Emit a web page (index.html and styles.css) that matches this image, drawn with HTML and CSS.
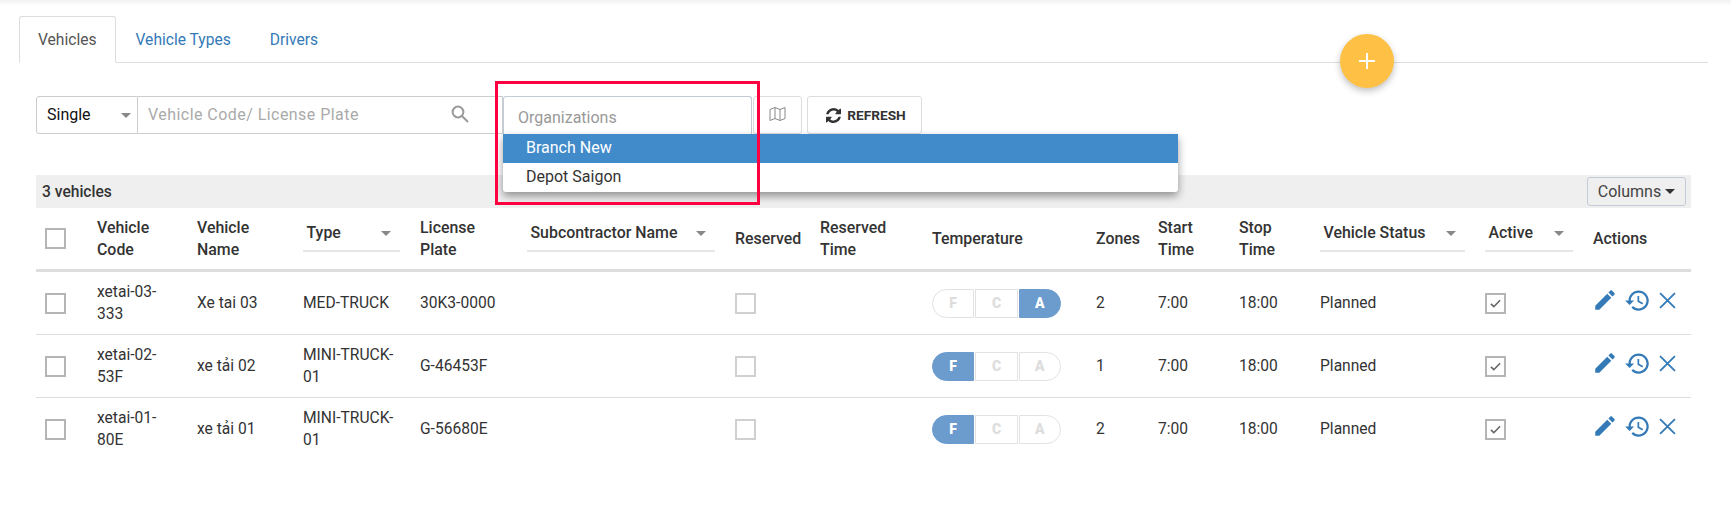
FILE: index.html
```html
<!DOCTYPE html>
<html lang="en">
<head>
    <meta charset="UTF-8">
    <title>Vehicles</title>
    <link rel="stylesheet" href="styles.css">
</head>
<body>
    <div class="top-shadow"></div>

    <div class="tabs">
        <a class="tab active">Vehicles</a>
        <a class="tab">Vehicle Types</a>
        <a class="tab">Drivers</a>
    </div>
    <button class="fab"><svg width="18" height="18" viewBox="0 0 18 18"><path d="M9 1v16M1 9h16" stroke="#fff" stroke-width="2"/></svg></button>

    <div class="toolbar">
        <div class="mode">Single<span class="arrow"></span></div>
        <div class="search">
            <span class="placeholder">Vehicle Code/ License Plate</span>
            <svg width="18" height="18" viewBox="0 0 18 18" fill="none" stroke="#999" stroke-width="2"><circle cx="7" cy="7" r="5.4"/><path d="M11 11l6 6"/></svg>
        </div>
        <div class="org-wrap">
            <div class="org-input">Organizations</div>
            <ul class="org-menu">
                <li class="selected">Branch New</li>
                <li>Depot Saigon</li>
            </ul>
        </div>
        <button class="btn map-btn"><svg width="17" height="14" viewBox="0 0 17 14" fill="none" stroke="#888" stroke-width="1"><path d="M1 2.5l5-2 5 2 5-2v11l-5 2-5-2-5 2zM6 .5v11M11 2.5v11"/></svg></button>
        <button class="btn refresh-btn"><svg width="15" height="15" viewBox="0 0 1536 1536" fill="#333"><path d="M1511 928q0 5-1 7-64 268-268 434.5t-478 166.5q-146 0-282.5-55t-243.5-157l-129 129q-19 19-45 19t-45-19-19-45v-448q0-26 19-45t45-19h448q26 0 45 19t19 45-19 45l-137 137q71 66 161 102t187 36q134 0 250-65t186-179q11-17 53-117 8-23 30-23h192q13 0 22.5 9.5t9.5 22.5zm25-800v448q0 26-19 45t-45 19h-448q-26 0-45-19t-19-45 19-45l138-138q-148-137-349-137-134 0-250 65t-186 179q-11 17-53 117-8 23-30 23h-199q-13 0-22.5-9.5t-9.5-22.5v-7q65-268 270-434.5t480-166.5q146 0 284 55.5t245 156.5l130-129q19-19 45-19t45 19 19 45z"/></svg>REFRESH</button>
    </div>

    <div class="highlight"></div>

    <div class="band">
        <span>3 vehicles</span>
        <button class="columns-btn">Columns<span class="caret"></span></button>
    </div>

    <table class="grid">
        <colgroup>
            <col class="c-check"><col class="c-code"><col class="c-name"><col class="c-type"><col class="c-plate">
            <col class="c-sub"><col class="c-res"><col class="c-rtime"><col class="c-temp"><col class="c-zones">
            <col class="c-start"><col class="c-stop"><col class="c-status"><col class="c-active"><col class="c-actions">
        </colgroup>
        <thead>
            <tr>
                <th><span class="box"></span></th>
                <th>Vehicle Code</th>
                <th>Vehicle Name</th>
                <th><div class="filter">Type<span class="arrow"></span></div></th>
                <th>License<br>Plate</th>
                <th><div class="filter">Subcontractor Name<span class="arrow"></span></div></th>
                <th>Reserved</th>
                <th>Reserved Time</th>
                <th>Temperature</th>
                <th>Zones</th>
                <th>Start<br>Time</th>
                <th>Stop<br>Time</th>
                <th><div class="filter">Vehicle Status<span class="arrow"></span></div></th>
                <th><div class="filter">Active<span class="arrow"></span></div></th>
                <th>Actions</th>
            </tr>
        </thead>
        <tbody>
            <tr>
                <td><span class="box"></span></td>
                <td>xetai-03-333</td>
                <td>Xe tai 03</td>
                <td>MED-TRUCK</td>
                <td>30K3-0000</td>
                <td></td>
                <td><span class="box light"></span></td>
                <td></td>
                <td><div class="temps"><span>F</span><span>C</span><span class="on">A</span></div></td>
                <td>2</td>
                <td>7:00</td>
                <td>18:00</td>
                <td>Planned</td>
                <td><span class="box checked"><svg width="13" height="11" viewBox="0 0 14 12" fill="none" stroke="#666" stroke-width="1.8"><path d="M2 6.5l3.2 3L12 2.5"/></svg></span></td>
                <td>
                    <div class="actions">
                        <svg class="a-edit" viewBox="0 0 24 24"><path d="M3 17.25V21h3.75L17.81 9.94l-3.75-3.75L3 17.25zM20.71 7.04c.39-.39.39-1.02 0-1.41l-2.34-2.34c-.39-.39-1.02-.39-1.41 0l-1.83 1.83 3.75 3.75 1.83-1.83z"/></svg>
                        <svg class="a-history" viewBox="0 0 24 24"><path d="M13 3c-4.97 0-9 4.03-9 9H1l3.89 3.89.07.14L9 12H6c0-3.87 3.13-7 7-7s7 3.13 7 7-3.13 7-7 7c-1.93 0-3.68-.79-4.94-2.06l-1.42 1.42C8.27 19.99 10.51 21 13 21c4.97 0 9-4.03 9-9s-4.03-9-9-9zm-1 5v5l4.28 2.54.72-1.21-3.5-2.08V8H12z"/></svg>
                        <svg class="a-close" viewBox="0 0 16 16"><path d="M1 1l14 14M15 1L1 15"/></svg>
                    </div>
                </td>
            </tr>
            <tr>
                <td><span class="box"></span></td>
                <td>xetai-02-53F</td>
                <td>xe tải 02</td>
                <td>MINI-TRUCK-01</td>
                <td>G-46453F</td>
                <td></td>
                <td><span class="box light"></span></td>
                <td></td>
                <td><div class="temps"><span class="on">F</span><span>C</span><span>A</span></div></td>
                <td>1</td>
                <td>7:00</td>
                <td>18:00</td>
                <td>Planned</td>
                <td><span class="box checked"><svg width="13" height="11" viewBox="0 0 14 12" fill="none" stroke="#666" stroke-width="1.8"><path d="M2 6.5l3.2 3L12 2.5"/></svg></span></td>
                <td>
                    <div class="actions">
                        <svg class="a-edit" viewBox="0 0 24 24"><path d="M3 17.25V21h3.75L17.81 9.94l-3.75-3.75L3 17.25zM20.71 7.04c.39-.39.39-1.02 0-1.41l-2.34-2.34c-.39-.39-1.02-.39-1.41 0l-1.83 1.83 3.75 3.75 1.83-1.83z"/></svg>
                        <svg class="a-history" viewBox="0 0 24 24"><path d="M13 3c-4.97 0-9 4.03-9 9H1l3.89 3.89.07.14L9 12H6c0-3.87 3.13-7 7-7s7 3.13 7 7-3.13 7-7 7c-1.93 0-3.68-.79-4.94-2.06l-1.42 1.42C8.27 19.99 10.51 21 13 21c4.97 0 9-4.03 9-9s-4.03-9-9-9zm-1 5v5l4.28 2.54.72-1.21-3.5-2.08V8H12z"/></svg>
                        <svg class="a-close" viewBox="0 0 16 16"><path d="M1 1l14 14M15 1L1 15"/></svg>
                    </div>
                </td>
            </tr>
            <tr>
                <td><span class="box"></span></td>
                <td>xetai-01-80E</td>
                <td>xe tải 01</td>
                <td>MINI-TRUCK-01</td>
                <td>G-56680E</td>
                <td></td>
                <td><span class="box light"></span></td>
                <td></td>
                <td><div class="temps"><span class="on">F</span><span>C</span><span>A</span></div></td>
                <td>2</td>
                <td>7:00</td>
                <td>18:00</td>
                <td>Planned</td>
                <td><span class="box checked"><svg width="13" height="11" viewBox="0 0 14 12" fill="none" stroke="#666" stroke-width="1.8"><path d="M2 6.5l3.2 3L12 2.5"/></svg></span></td>
                <td>
                    <div class="actions">
                        <svg class="a-edit" viewBox="0 0 24 24"><path d="M3 17.25V21h3.75L17.81 9.94l-3.75-3.75L3 17.25zM20.71 7.04c.39-.39.39-1.02 0-1.41l-2.34-2.34c-.39-.39-1.02-.39-1.41 0l-1.83 1.83 3.75 3.75 1.83-1.83z"/></svg>
                        <svg class="a-history" viewBox="0 0 24 24"><path d="M13 3c-4.97 0-9 4.03-9 9H1l3.89 3.89.07.14L9 12H6c0-3.87 3.13-7 7-7s7 3.13 7 7-3.13 7-7 7c-1.93 0-3.68-.79-4.94-2.06l-1.42 1.42C8.27 19.99 10.51 21 13 21c4.97 0 9-4.03 9-9s-4.03-9-9-9zm-1 5v5l4.28 2.54.72-1.21-3.5-2.08V8H12z"/></svg>
                        <svg class="a-close" viewBox="0 0 16 16"><path d="M1 1l14 14M15 1L1 15"/></svg>
                    </div>
                </td>
            </tr>
        </tbody>
    </table>
</body>
</html>
```

FILE: styles.css
```css
html, body {
    height: 506px;
    overflow: hidden;
}
body {
    margin: 0;
    position: relative;
    font-family: Roboto, Arial, sans-serif;
    font-size: 15.6px;
    line-height: 22px;
    color: #333;
    background-color: #fff;
}
.top-shadow {
    height: 6px;
    margin-bottom: 10px;
    background: linear-gradient(#f2f2f2, #fff);
}

/* tabs */
.tabs {
    display: flex;
    height: 46px;
    margin: 0 23px 0 19px;
    border-bottom: 1px solid #ddd;
}
.tab {
    height: 47px;
    box-sizing: border-box;
    padding: 12px 18px 0;
    margin-right: 1px;
    color: #337ab7;
    border: 1px solid transparent;
}
.tab.active {
    color: #555;
    background-color: #fff;
    border-color: #ddd #ddd #fff;
    border-radius: 3px 3px 0 0;
}
.fab {
    position: absolute;
    left: 1340px;
    top: 34px;
    width: 54px;
    height: 54px;
    padding: 0;
    border: none;
    border-radius: 50%;
    background-color: #ffc145;
    box-shadow: 0 3px 7px rgba(0, 0, 0, 0.25);
    display: flex;
    align-items: center;
    justify-content: center;
}

/* toolbar */
.toolbar {
    display: flex;
    height: 38px;
    margin: 33px 0 0 36px;
    font-size: 16px;
}
.arrow {
    display: inline-block;
    width: 0;
    height: 0;
    border-left: 5px solid transparent;
    border-right: 5px solid transparent;
    border-top: 5px solid #888;
}
.mode {
    width: 102px;
    box-sizing: border-box;
    padding: 0 6px 0 10px;
    display: flex;
    align-items: center;
    justify-content: space-between;
    color: #111;
    border: 1px solid #ccc;
    border-radius: 3px 0 0 3px;
}
.search {
    width: 365px;
    box-sizing: border-box;
    padding: 0 33px 0 10px;
    display: flex;
    align-items: center;
    justify-content: space-between;
    border: 1px solid #ccc;
    border-left: none;
}
.search svg {
    margin-bottom: 2px;
}
.placeholder {
    color: #aaa;
    letter-spacing: 0.45px;
}
.org-wrap {
    position: relative;
    width: 249px;
    margin-right: 1px;
}
.org-input {
    height: 38px;
    box-sizing: border-box;
    padding: 10px 14px 0;
    color: #999;
    background-color: #fff;
    border: 1px solid #c3cbd9;
    border-bottom: none;
    border-radius: 3px 3px 0 0;
}
.org-menu {
    position: absolute;
    z-index: 3;
    left: 0;
    top: 38px;
    width: 675px;
    margin: 0;
    padding: 0;
    list-style: none;
    background-color: #fff;
    border-radius: 0 0 3px 3px;
    box-shadow: 0 4px 8px rgba(0, 0, 0, 0.4);
}
.org-menu li {
    height: 29px;
    padding-left: 23px;
    line-height: 28px;
}
.org-menu li.selected {
    color: #fff;
    background-color: #428bca;
}
.btn {
    height: 38px;
    box-sizing: border-box;
    padding: 0;
    display: flex;
    align-items: center;
    justify-content: center;
    background-color: #fff;
    border: 1px solid #ddd;
    border-radius: 3px;
    font-family: inherit;
}
.map-btn {
    width: 49px;
    margin-right: 5px;
    padding-bottom: 2px;
}
.refresh-btn {
    width: 115px;
    padding-left: 3px;
    gap: 6px;
    font-size: 13.7px;
    font-weight: 700;
    color: #333;
}
.highlight {
    position: absolute;
    z-index: 4;
    left: 495px;
    top: 81px;
    width: 265px;
    height: 124px;
    box-sizing: border-box;
    border: 3px solid #ff0040;
}

/* grey band over the table */
.band {
    height: 33px;
    margin: 41px 40px 0 36px;
    padding: 0 5px 0 6px;
    display: flex;
    align-items: center;
    justify-content: space-between;
    font-weight: 500;
    background-color: #efefef;
}
.columns-btn {
    width: 99px;
    height: 29px;
    padding: 0;
    color: #444;
    background-color: #efefef;
    border: 1px solid #c3cbd9;
    border-radius: 3px;
    font-family: inherit;
    font-size: 16px;
}
.caret {
    display: inline-block;
    margin-left: 4px;
    vertical-align: 3px;
    border-left: 5px solid transparent;
    border-right: 5px solid transparent;
    border-top: 5px solid #333;
}

/* table */
.grid {
    width: 1655px;
    margin-left: 36px;
    table-layout: fixed;
    border-collapse: collapse;
}
.c-check { width: 55px; }
.c-code { width: 100px; }
.c-name { width: 106px; }
.c-type { width: 117px; }
.c-plate { width: 107px; }
.c-sub { width: 208px; }
.c-res { width: 85px; }
.c-rtime { width: 112px; }
.c-temp { width: 164px; }
.c-zones { width: 62px; }
.c-start { width: 81px; }
.c-stop { width: 81px; }
.c-status { width: 165px; }
.c-active { width: 108px; }
.c-actions { width: 104px; }

th, td {
    padding: 0 14px 0 6px;
    text-align: left;
    vertical-align: middle;
}
th {
    height: 61px;
    font-size: 15.9px;
    font-weight: 500;
    border-bottom: 3px solid #ddd;
}
td {
    height: 62px;
    border-bottom: 1px solid #ddd;
}
tbody tr:last-child td {
    border-bottom: none;
}
th:first-child, td:first-child {
    padding-left: 9px;
}
th:last-child, td:last-child {
    padding-right: 0;
}
.box {
    display: flex;
    align-items: center;
    justify-content: center;
    width: 21px;
    height: 21px;
    box-sizing: border-box;
    border: 2px solid #b5b5b5;
}
.box.light {
    border-color: #d0d0d0;
}
.filter {
    display: flex;
    align-items: center;
    justify-content: space-between;
    height: 34px;
    margin-bottom: 7px;
    padding: 0 9px 2px 3.5px;
    box-sizing: border-box;
    white-space: nowrap;
    border-bottom: 2px solid #e6e6e6;
}
.temps {
    display: flex;
    gap: 1px;
    width: 129px;
}
.temps span {
    flex: 1;
    height: 29px;
    box-sizing: border-box;
    text-align: center;
    line-height: 27px;
    font-size: 14px;
    font-weight: 900;
    color: #ddd;
    border: 1px solid #e2e2e2;
}
.temps span:first-child {
    border-radius: 15px 0 0 15px;
}
.temps span:last-child {
    border-radius: 0 15px 15px 0;
}
.temps span.on {
    color: #fff;
    background-color: #6c9bcd;
    border-color: #6c9bcd;
}
.actions {
    display: flex;
    align-items: center;
    margin-left: 1px;
    margin-bottom: 6px;
}
.a-edit {
    width: 26px;
    height: 26px;
    margin-left: -2px;
    fill: #337ab7;
}
.a-history {
    width: 27px;
    height: 27px;
    margin-left: 6px;
    fill: #337ab7;
}
.a-close {
    width: 17px;
    height: 17px;
    margin-left: 8px;
    fill: none;
    stroke: #337ab7;
    stroke-width: 1.7;
}
```
